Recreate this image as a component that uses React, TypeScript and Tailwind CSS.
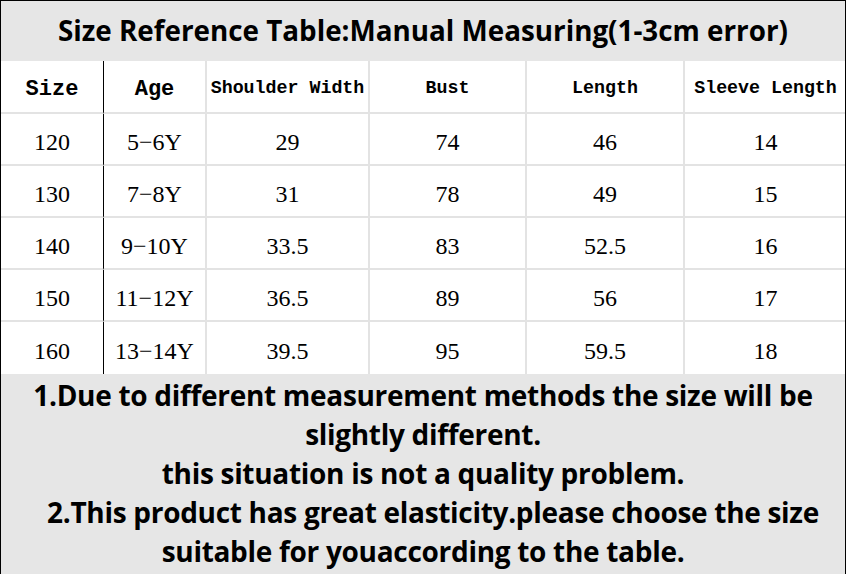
const columns = ['Size', 'Age', 'Shoulder Width', 'Bust', 'Length', 'Sleeve Length'];

const rows = [
  ['120', '5−6Y', '29', '74', '46', '14'],
  ['130', '7−8Y', '31', '78', '49', '15'],
  ['140', '9−10Y', '33.5', '83', '52.5', '16'],
  ['150', '11−12Y', '36.5', '89', '56', '17'],
  ['160', '13−14Y', '39.5', '95', '59.5', '18'],
];

// borders between cells: black after the first column, light grey elsewhere
function cellBorder(col: number) {
  if (col === 0) return 'border-r-[1.5px] border-r-black';
  if (col === columns.length - 1) return '';
  return 'border-r-2 border-r-[#e3e3e3]';
}

export default function App() {
  return (
    <div className="w-[846px] h-[574px] overflow-hidden bg-white text-black border-l border-t border-r border-black flex flex-col">
      {/* Title */}
      <div className="h-[60px] shrink-0 bg-[#e6e6e6] flex items-center justify-center text-[27.8px] font-bold font-['Open_Sans','Noto_Sans',sans-serif]">
        Size Reference Table:Manual Measuring(1-3cm error)
      </div>

      {/* Table */}
      <div className="grid grid-cols-[103px_103px_163px_157px_158px_161px]">
        {columns.map((c, i) => (
          <div
            key={c}
            className={`h-[53px] pt-[5px] flex items-center justify-center font-bold border-b-2 border-b-[#e3e3e3] font-['Liberation_Mono','DejaVu_Sans_Mono',monospace] ${
              i < 2 ? 'text-[22px]' : 'text-[18.3px]'
            } ${cellBorder(i)}`}
          >
            {c}
          </div>
        ))}
        {rows.map((r, ri) =>
          r.map((v, ci) => (
            <div
              key={`${ri}-${ci}`}
              className={`h-[52px] pt-[5px] flex items-center justify-center text-[24px] font-['Liberation_Serif','DejaVu_Serif',serif] ${
                ri < rows.length - 1 ? 'border-b-2 border-b-[#e3e3e3]' : ''
              } ${cellBorder(ci)}`}
            >
              {v}
            </div>
          ))
        )}
      </div>

      {/* Notes */}
      <div className="flex-1 pt-[2px] bg-[#e6e6e6] flex flex-col items-center text-[28px] font-bold leading-[39px] tracking-[-0.3px] font-['Open_Sans','Noto_Sans',sans-serif]">
        <div>1.Due to different measurement methods the size will be</div>
        <div>slightly different.</div>
        <div>this situation is not a quality problem.</div>
        <div className="pl-[20px]">2.This product has great elasticity.please choose the size</div>
        <div>suitable for youaccording to the table.</div>
      </div>
    </div>
  );
}
